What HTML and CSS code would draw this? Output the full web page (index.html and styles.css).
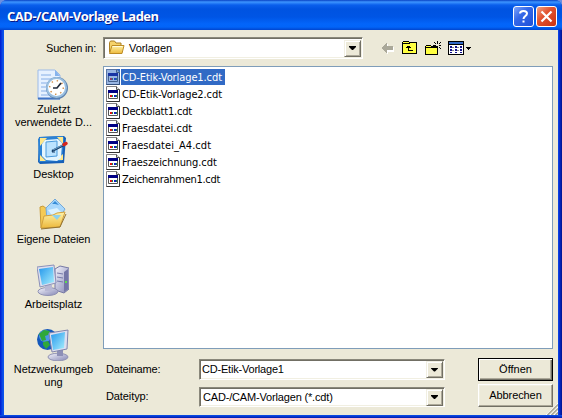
FILE: index.html
```html
<!DOCTYPE html>
<html lang="de">
<head>
<meta charset="utf-8">
<title>CAD-/CAM-Vorlage Laden</title>
<link rel="stylesheet" href="styles.css">
</head>
<body>
<svg width="0" height="0" class="defs">
  <defs>
    <linearGradient id="sky" x1="0" y1="0" x2="1" y2="1"><stop offset="0" stop-color="#2497ec"/><stop offset="1" stop-color="#a8effd"/></linearGradient>
    <linearGradient id="gold" x1="0" y1="0" x2="0" y2="1"><stop offset="0" stop-color="#fff3a9"/><stop offset="1" stop-color="#edb93c"/></linearGradient>
    <linearGradient id="metal" x1="0" y1="0" x2="1" y2="1"><stop offset="0" stop-color="#f4f4fc"/><stop offset="1" stop-color="#8587b5"/></linearGradient>
    <symbol id="doc" viewBox="0 0 14 16">
      <path d="M.5.5h10l3 3v12H.5z" fill="#fff" stroke="#848284"/>
      <path d="M13.500 3.500v12H.5" fill="none" stroke="#333"/>
      <path d="M10.500.5v3h3" fill="#ddd" stroke="#555"/>
      <path d="M2.500 4.500h9v8h-9z" fill="#fff" stroke="#555"/>
      <path d="M2 4h10v3H2z" fill="#000084"/>
      <path d="M4 9h2v2H4z" fill="#e01010"/><path d="M6 9h1v2H6zM10 9h1v2h-1z" fill="#1b7a50"/><path d="M8 9h2v2H8z" fill="#1020c8"/>
    </symbol>
  </defs>
</svg>
<div class="window">
  <header class="titlebar">
    <h1>CAD-/CAM-Vorlage Laden</h1>
    <button class="cap help"><svg width="19" height="19" viewBox="0 0 19 19"><path d="M6 6.500C6 3 13 3 13 6.500 13 9 9.500 9 9.500 12M9.500 13.500v2" fill="none" stroke="#fff" stroke-width="2"/></svg></button>
    <button class="cap close"><svg width="19" height="19" viewBox="0 0 19 19"><path d="M4.500 4.500l10 10M14.500 4.500l-10 10" stroke="#fff" stroke-width="2.200"/></svg></button>
  </header>
  <div class="lookup">
    <label><span class="t-such">Suchen in:</span></label>
    <div class="combo top">
      <svg class="folder" width="17" height="16" viewBox="0 0 17 16"><path d="M1.500 12V2.500l1-1.500h4l1.500 2h5v9z" fill="#f6d36b" stroke="#ac8024"/><path d="M1.500 13.500L4 5.500h12l-2 8z" fill="url(#gold)" stroke="#bd8c25"/><path d="M4.500 6.500h10" stroke="#fffce0"/></svg>
      <span class="t-vor">Vorlagen</span><i class="drop"></i>
    </div>
    <div class="tools">
      <svg width="92" height="18" viewBox="0 0 92 18" shape-rendering="crispEdges">
        <path d="M2 10l6-5v3h6v5H8v2z" fill="#fff"/><path d="M1 9l6-5v3h6v4H7v3z" fill="#aaa899"/>
        <path d="M22.500 14.500v-11l1-1h5l1 1h7v11z" fill="#ffff42" stroke="#000"/><path d="M23 4.500h7" stroke="#000"/>
        <path d="M28.500 7v4.500H33M26 8.500h5M27 7.500h3" stroke="#000" fill="none"/>
        <path d="M45.500 15.500v-8l1-1h4l1 1h6v8z" fill="#ffff42" stroke="#000"/><path d="M46 8.500h11" stroke="#000"/>
        <path d="M57 2h1v3h-1zM57 8h1v3h-1zM53 6h3v1h-3zM59 6h2v1h-2zM54 3h1v1h-1zM55 4h1v1h-1zM60 3h1v1h-1zM59 4h1v1h-1zM59 8h1v1h-1zM60 9h1v1h-1zM55 8h1v1h-1z"/>
        <path d="M68.500 2.500h15v13h-15z" fill="#fff" stroke="#000"/><path d="M69 3h14v2H69z" fill="#3169c6"/><path d="M68 5h16v1H68z"/>
        <path d="M70 7h2v2h-2zM75 7h2v2h-2zM80 7h2v2h-2zM70 10h2v2h-2zM75 10h2v2h-2zM80 10h2v2h-2zM70 13h2v1h-2zM75 13h2v1h-2zM80 13h2v1h-2z" fill="#10108c"/>
        <path d="M72 8h2v1h-2zM77 8h2v1h-2zM72 11h2v1h-2zM77 11h2v1h-2z" fill="#888"/>
        <path d="M86 8h5v1h-5zM87 9h3v1h-3zM88 10h1v1h-1z"/>
      </svg>
    </div>
  </div>
  <div class="main">
    <nav class="places">
      <a><svg width="32" height="32" viewBox="0 0 32 32"><path d="M1 1h17l5 5v24H1z" fill="#e6f1ff" stroke="#9dbbe8"/><path d="M18 1v6h5z" fill="#86b3ec"/><path d="M4 6h10M4 10h12M4 14h9M4 18h7M4 22h7M4 26h8" stroke="#86aee6"/><path d="M1 29.500h22" stroke="#3f73c5" stroke-width="2"/><circle cx="20" cy="19" r="11" fill="#5d82ae"/><circle cx="19.500" cy="18.500" r="9.500" fill="#fff" stroke="#9abfe0" stroke-width="2"/><circle cx="19.500" cy="18.500" r="6.800" fill="none" stroke="#d1904d" stroke-width="1.500" stroke-dasharray="1.400 3.940"/><path d="M24 14l-4 5h-4" fill="none" stroke="#202a3b" stroke-width="1.700"/></svg><span>Zuletzt</span><span>verwendete D...</span></a>
      <a><svg width="32" height="32" viewBox="0 0 32 32"><path d="M2 3l25-1 2 2-2 25-24 1-2-2z" fill="#1760b8"/><path d="M1 5l2-2 23-1 1 2-2 23-23 1z" fill="#2c82d4"/><path d="M3 4h7l-7 8zM20 3h6v7zM3 21l6 6H3zM26 20v6h-7z" fill="#ffe78b"/><path d="M8 6l13-1 4 4-1 15-4 3-11-1-4-4V10z" fill="#e4f5ff"/><path d="M9 8l11-1v15l-11 1z" fill="#bce3ff" stroke="#4b9adc"/><path d="M15 17l12-6" stroke="#173d68" stroke-width="2"/><path d="M16 16l-1 2h3" fill="none" stroke="#173d68"/><path d="M16 16l12-6" stroke="#6ca4cd"/><path d="M27 10.500l2-1" stroke="#d7251b" stroke-width="3.500" stroke-linecap="round"/></svg><span>Desktop</span></a>
      <a><svg width="32" height="32" viewBox="0 0 32 32"><path d="M3 8l3-1 4 3 9-2v20L4 29z" fill="#f5ca54" stroke="#c99b37"/><path d="M9 9L18 0l10 10-8 13-10-2z" fill="#a9d8fc" stroke="#73a9d9"/><path d="M15 5l3-3 4 4-4-1z" fill="#358bd6"/><path d="M11 11l9-2 5 5-6 8z" fill="#dcf2ff"/><path d="M4 29l3-12 9-1 4-2 8-1-5 15z" fill="url(#gold)" stroke="#d2a13c"/><path d="M15 16h9l-4 5z" fill="#8fd2ed"/><path d="M4 30l19-2 6-13" fill="none" stroke="#937331"/></svg><span class="t-eig">Eigene Dateien</span></a>
      <a><svg width="32" height="32" viewBox="0 0 32 32"><path d="M18 5l5-3 9 2v21l-5 4-9-3z" fill="url(#metal)" stroke="#7779a5"/><path d="M27 8v20l4-3V5z" fill="#7476a6"/><path d="M20 9l6 1M20 13l6 1M20 17l6 1" stroke="#777baa"/><path d="M28 17h2v2h-2z" fill="#5de04c"/><ellipse cx="11" cy="27.500" rx="10" ry="4" fill="url(#metal)" stroke="#9092b3"/><path d="M8 21h7v6H8z" fill="#b8b8d4"/><path d="M0 3l17-2 2 18-16 4z" fill="#dddff0" stroke="#8b90b8"/><path d="M2 5l14-2 1 15-12 3z" fill="url(#sky)"/></svg><span>Arbeitsplatz</span></a>
      <a><svg width="32" height="32" viewBox="0 0 32 32"><circle cx="10.500" cy="10.500" r="10.500" fill="#1559bb"/><circle cx="8" cy="7" r="6" fill="#4b98e8"/><path d="M2 5l5-4 6 1-2 4-3 1 1 4-4 1zM6 13l5-1 2 4-4 4-3-4z" fill="#2fa83a"/><ellipse cx="21" cy="28" rx="10" ry="3.800" fill="url(#metal)" stroke="#9092b3"/><path d="M20 21h6v6h-6z" fill="#8d8fb6"/><path d="M12 4l19-3-1 19-15 3z" fill="#dddff0" stroke="#8185ad"/><path d="M14 6l14-3-1 16-11 2z" fill="url(#sky)"/></svg><span>Netzwerkumgeb</span><span>ung</span></a>
    </nav>
    <section class="content">
      <ul class="files">
        <li class="selected"><svg><use href="#doc"/></svg><span class="f1">CD-Etik-Vorlage1.cdt</span></li>
        <li><svg><use href="#doc"/></svg><span class="f1">CD-Etik-Vorlage2.cdt</span></li>
        <li><svg><use href="#doc"/></svg><span class="f3">Deckblatt1.cdt</span></li>
        <li><svg><use href="#doc"/></svg><span>Fraesdatei.cdt</span></li>
        <li><svg><use href="#doc"/></svg><span class="f5">Fraesdatei_A4.cdt</span></li>
        <li><svg><use href="#doc"/></svg><span class="f6">Fraeszeichnung.cdt</span></li>
        <li><svg><use href="#doc"/></svg><span class="f7">Zeichenrahmen1.cdt</span></li>
      </ul>
      <div class="form">
        <div class="row"><label><span class="t-dn">Dateiname:</span></label><div class="combo"><span class="t-cd">CD-Etik-Vorlage1</span><i class="drop"></i></div><button class="btn default"><span class="t-off">Öffnen</span></button></div>
        <div class="row"><label><span class="t-dt">Dateityp:</span></label><div class="combo"><span class="t-cam">CAD-/CAM-Vorlagen (*.cdt)</span><i class="drop"></i></div><button class="btn"><span class="t-abb">Abbrechen</span></button></div>
      </div>
    </section>
  </div>
  <svg class="grip" width="12" height="12" viewBox="0 0 12 12"><path d="M0 12L12 0M4 12l8-8M8 12l4-4" stroke="#fff"/><path d="M1.500 12L12 1.500M5.500 12L12 5.500M9.500 12L12 9.500" stroke="#aca899" stroke-width="1.700"/></svg>
</div>
</body>
</html>
```
FILE: styles.css
```css
* { box-sizing: border-box; }
body { margin: 0; background: #6b8fe0; overflow: hidden; font: 11px/13px "Liberation Sans", Arial, sans-serif; color: #000; }
.defs { position: absolute; }
.window { position: relative; width: 562px; height: 418px; padding: 0 4px 3px; background: linear-gradient(90deg, #0019cf 0, #0c53eb 3px, #0c53eb 4px, #0c53eb 558px, #0831d9 559px, #00138c 562px); border-radius: 7px 7px 0 0; display: flex; flex-direction: column; }
.window::after { content: ""; position: absolute; left: 0; right: 0; bottom: 0; height: 3px; background: linear-gradient(#0c53eb, #0019b0); }
.titlebar { height: 30px; flex: none; margin: 0 -4px; padding: 1px 5px 0 7px; display: flex; align-items: center; gap: 2px; border-radius: 7px 7px 0 0; background: linear-gradient(#0842c4 0, #3d95ff 2px, #0a5fec 5px, #0053e1 9px, #0055e5 17px, #0365fa 24px, #0264f8 27px, #0145ce 30px); }
h1 { margin: 0 auto 0 0; font: bold 13px/18px "Open Sans", "Noto Sans", sans-serif; letter-spacing: -.49px; color: #fff; text-shadow: 1px 1px #0a1883; white-space: nowrap; padding-top: 1px; }
button { padding: 0; font: inherit; color: inherit; }
.cap { width: 21px; height: 21px; margin-top: 1px; border: 1px solid #fff; border-radius: 3px; background: linear-gradient(135deg, #7ea4fa, #3568e8 40%, #1e50d8); display: flex; }
.close { background: linear-gradient(135deg, #f1a182, #e25431 40%, #cb3210); }
.lookup { height: 36px; flex: none; background: #ece9d8; display: flex; padding-top: 7px; }
.lookup label { width: 92px; margin-right: 7px; padding-top: 5px; text-align: right; }
span { white-space: nowrap; }
.t-such { letter-spacing: -.2px; }
.combo .t-vor { letter-spacing: -.05px; }
.t-eig { letter-spacing: -.12px; }
.t-dn { letter-spacing: -.2px; }
.t-dt { letter-spacing: -.1px; }
.t-cd { letter-spacing: -.2px; }
.t-cam { letter-spacing: -.17px; }
.t-abb { letter-spacing: -.1px; }
.combo { display: flex; align-items: center; height: 21px; width: 246px; background: #fff; border: 1px solid; border-color: #8a887b #fff #fff #8a887b; box-shadow: inset 1px 1px #716f64, inset -1px -1px #f1efe2; padding: 1px 1px 1px 2px; }
.combo.top { width: 260px; height: 22px; padding-left: 4px; }
.combo.top span { margin-left: 4px; }
.drop { width: 17px; height: 17px; margin-left: auto; flex: none; background: #ece9d8; border: 1px solid; border-color: #f1efe2 #716f64 #716f64 #f1efe2; box-shadow: inset 1px 1px #fff, inset -1px -1px #aca899; display: flex; justify-content: center; align-items: center; }
.drop::after { content: ""; width: 7px; height: 4px; background: #000; clip-path: polygon(0 0, 100% 0, 100% 25%, 57% 100%, 43% 100%, 0 25%); }
.tools { margin: 2px 0 0 17px; }
.main { flex: 1; background: #ece9d8; display: flex; min-height: 0; }
.places { width: 99px; flex: none; padding-top: 3px; }
.places a { height: 65px; display: flex; flex-direction: column; align-items: center; }
.places svg { margin-bottom: 2px; margin-left: -2px; }
.places span { height: 13px; }
.content { width: 450px; }
.files { list-style: none; margin: 0; height: 283px; padding: 1px 2px; border: 1px solid #7f9db9; background: #fff; font-family: "DejaVu Sans Condensed", "DejaVu Sans", sans-serif; font-stretch: condensed; }
.files li { height: 17px; display: flex; align-items: center; }
.files svg { width: 14px; height: 16px; margin-right: 1px; }
.files span { padding: 1px; height: 16px; line-height: 15px; }
.files .f1 { letter-spacing: -.1px; }
.files .f3 { letter-spacing: -.2px; }
.files .f5 { letter-spacing: .06px; }
.files .f6 { letter-spacing: -.06px; }
.files .f7 { letter-spacing: -.28px; }
.selected span { background: #316ac5; color: #fff; width: 104px; }
.selected svg { background: #316ac5; }
.selected use { opacity: .5; }
.form { padding-top: 9px; }
.row { height: 26px; display: flex; align-items: flex-start; }
.row label { width: 93px; padding: 5px 0 0 3px; }
.row + .row label { padding-top: 6px; }
.row .combo { margin: 1px 0 0 3px; width: 246px; }
.row + .row .combo { margin-top: 3px; height: 20px; }
.row + .row .combo span { padding-left: 1px; }
.btn { width: 75px; height: 23px; margin: 0 0 0 33px; background: #ece9d8; border: 1px solid; border-color: #fff #716f64 #716f64 #fff; box-shadow: inset -1px -1px #aca899, inset 1px 1px #f1efe2; }
.btn.default { border-color: #000; box-shadow: inset 1px 1px #fff, inset -1px -1px #716f64, inset -2px -2px #aca899; }
.grip { position: absolute; right: 4px; bottom: 3px; }
```
